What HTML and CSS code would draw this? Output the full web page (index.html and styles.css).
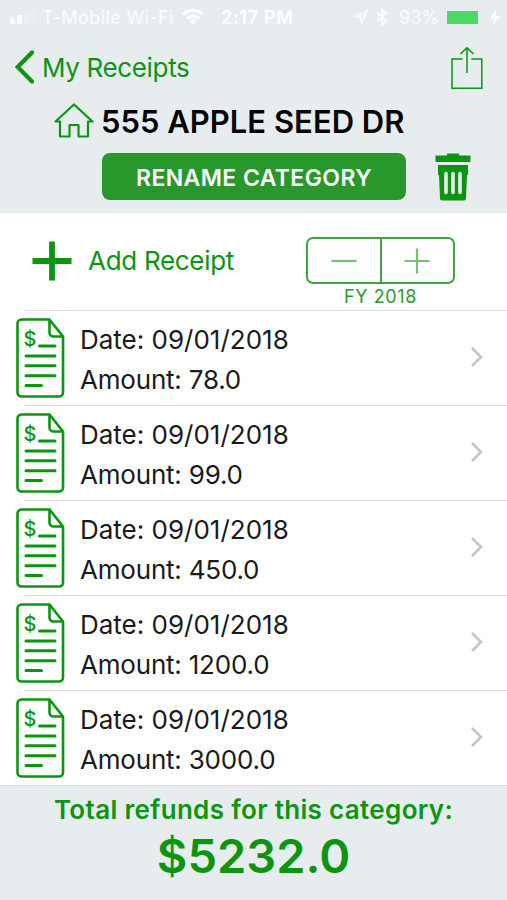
FILE: index.html
```html
<!DOCTYPE html>
<html lang="en">
  <head>
    <meta charset="UTF-8" />
    <meta name="viewport" content="width=device-width, initial-scale=1.0" />
    <title>My Receipts</title>
    <link rel="stylesheet" href="styles.css">
  </head>
  <body>
    <svg class="sprite" aria-hidden="true">
      <symbol id="icon-receipt" viewBox="0 0 49 80">
        <path d="M33.5 1.5H5.5a4 4 0 0 0-4 4v69a4 4 0 0 0 4 4h37.500a4 4 0 0 0 4-4V18.500L33.500 1.500V14.500a4 4 0 0 0 4 4H46.500" fill="none" stroke="currentColor" stroke-width="2.600" stroke-linejoin="round" />
        <path d="M23.500 28H39M10 38H39M10 47.800H39M10 57.800H39M10 67.600H25.500" fill="none" stroke="currentColor" stroke-width="3" stroke-linecap="round" />
      </symbol>
      <symbol id="icon-chevron" viewBox="0 0 14 22">
        <path d="M2 2l9 9-9 9" fill="none" stroke="currentColor" stroke-width="2.600" />
      </symbol>
    </svg>

    <header class="header">
      <div class="status-bar">
        <svg class="signal" width="27" height="16" viewBox="0 0 27 16">
          <g fill="#fff">
            <rect x="0" y="9" width="5" height="6" rx="1.500" />
            <rect x="7" y="6" width="5" height="9" rx="1.500" />
            <rect x="14" y="3" width="5" height="12" rx="1.500" opacity=".15" />
            <rect x="21" y="0" width="5" height="15" rx="1.500" opacity=".15" />
          </g>
        </svg>
        <span class="carrier">T-Mobile Wi-Fi</span>
        <svg class="wifi" width="22" height="16" viewBox="0 0 22 16">
          <g fill="none" stroke="#fff" stroke-width="3">
            <path d="M1.300 5.500a14 14 0 0 1 19.400 0" />
            <path d="M5 9.500a8.500 8.500 0 0 1 12 0" />
          </g>
          <path d="M11 15.500l-3.400-3.600a5 5 0 0 1 6.800 0z" fill="#fff" />
        </svg>
        <span class="clock">2:17 PM</span>
        <svg class="location" width="16" height="16" viewBox="0 0 16 16">
          <path d="M14.500 1.500L1 7.500l6.500 1L8.500 15z" fill="#fff" fill-opacity=".3" stroke="#fff" stroke-opacity=".7" stroke-width="1.500" stroke-linejoin="round" />
        </svg>
        <svg class="bluetooth" width="12" height="18" viewBox="0 0 12 18">
          <path d="M1.500 5l9 8L6 16.500v-15L10.500 5l-9 8" fill="none" stroke="#fff" stroke-opacity=".8" stroke-width="1.900" />
        </svg>
        <span class="battery-level">93%</span>
        <span class="battery"></span>
        <svg class="bolt" width="10" height="15" viewBox="0 0 10 15">
          <path d="M6 0L0 8.500h4L3 15l7-9H5.500z" fill="#fff" />
        </svg>
      </div>

      <nav class="nav-bar">
        <a class="back">
          <svg width="20" height="34" viewBox="0 0 20 34">
            <path d="M17 2.500L2.700 17l14.300 14.500" fill="none" stroke="currentColor" stroke-width="4.200" stroke-linecap="round" />
          </svg>
          <span>My Receipts</span>
        </a>
        <svg class="share" width="32" height="44" viewBox="0 0 32 44">
          <g fill="none" stroke="currentColor" stroke-width="1.500">
            <path d="M11.500 12H1V41.300H30.800V12H20.300" />
            <path d="M16 26V.800M9.500 7L16 .700 22.500 7" />
          </g>
        </svg>
      </nav>

      <div class="title">
        <svg width="40" height="36" viewBox="0 0 40 36">
          <path d="M6 18.500H1.500L20 1.500l18.500 17H34V33.500H24.500V22H15.500V33.500H6z" fill="none" stroke="currentColor" stroke-width="2.200" stroke-linejoin="round" />
        </svg>
        <h1>555 APPLE SEED DR</h1>
      </div>

      <div class="actions">
        <button class="rename">RENAME CATEGORY</button>
        <svg class="trash" width="36" height="48" viewBox="0 0 36 48">
          <path d="M12 2.500V.500h12v2h11.500V9H.500V2.500z" fill="currentColor" />
          <path d="M3 12h30v10h-1L31 45.500a2 2 0 0 1-2 2H7a2 2 0 0 1-2-2L4 22H3z" fill="currentColor" />
          <path d="M11 20.500v19M18 20.500v19M25 20.500v19" stroke="#e7edef" stroke-width="3.600" stroke-linecap="round" />
        </svg>
      </div>
    </header>

    <main>
      <section class="add-row">
        <svg class="plus" width="40" height="40" viewBox="0 0 40 40">
          <path d="M20 .500v39M.500 20h39" stroke="currentColor" stroke-width="5.800" />
        </svg>
        <span class="add-label">Add Receipt</span>
        <div class="year">
          <div class="stepper">
            <span>
              <svg width="26" height="26" viewBox="0 0 26 26">
                <path d="M.500 13h25" stroke="currentColor" stroke-width="2.200" />
              </svg>
            </span>
            <span>
              <svg width="26" height="26" viewBox="0 0 26 26">
                <path d="M.500 13h25M13 .500v25" stroke="currentColor" stroke-width="2.200" />
              </svg>
            </span>
          </div>
          <div class="year-label">FY 2018</div>
        </div>
      </section>

      <ul class="receipts">
        <li>
          <svg class="receipt-icon"><use href="#icon-receipt" /><text x="7.500" y="28">$</text></svg>
          <div class="details">
            <div class="date">Date: 09/01/2018</div>
            <div class="amount">Amount: 78.0</div>
          </div>
          <svg class="chevron"><use href="#icon-chevron" /></svg>
        </li>
        <li>
          <svg class="receipt-icon"><use href="#icon-receipt" /><text x="7.500" y="28">$</text></svg>
          <div class="details">
            <div class="date">Date: 09/01/2018</div>
            <div class="amount">Amount: 99.0</div>
          </div>
          <svg class="chevron"><use href="#icon-chevron" /></svg>
        </li>
        <li>
          <svg class="receipt-icon"><use href="#icon-receipt" /><text x="7.500" y="28">$</text></svg>
          <div class="details">
            <div class="date">Date: 09/01/2018</div>
            <div class="amount">Amount: 450.0</div>
          </div>
          <svg class="chevron"><use href="#icon-chevron" /></svg>
        </li>
        <li>
          <svg class="receipt-icon"><use href="#icon-receipt" /><text x="7.500" y="28">$</text></svg>
          <div class="details">
            <div class="date">Date: 09/01/2018</div>
            <div class="amount">Amount: 1200.0</div>
          </div>
          <svg class="chevron"><use href="#icon-chevron" /></svg>
        </li>
        <li>
          <svg class="receipt-icon"><use href="#icon-receipt" /><text x="7.500" y="28">$</text></svg>
          <div class="details">
            <div class="date">Date: 09/01/2018</div>
            <div class="amount">Amount: 3000.0</div>
          </div>
          <svg class="chevron"><use href="#icon-chevron" /></svg>
        </li>
      </ul>
    </main>

    <footer class="total">
      <div class="total-label">Total refunds for this category:</div>
      <div class="total-amount">$5232.0</div>
    </footer>
  </body>
</html>
```
FILE: styles.css
```css
* {
  box-sizing: border-box;
}

body {
  display: flex;
  flex-direction: column;
  height: 900px;
  margin: 0;
  overflow: hidden;
  background: white;
  color: #0b9510;
  font-family: Inter, "Liberation Sans", sans-serif;
  white-space: nowrap;
}

svg {
  display: block;
  flex-shrink: 0;
}

.sprite {
  position: absolute;
  width: 0;
  height: 0;
}

/* Header */
.header {
  height: 213px;
  background: #e7edef;
}

.status-bar {
  display: flex;
  align-items: center;
  height: 34px;
  padding-left: 10px;
  color: white;
  font-size: 18px;
}

.signal {
  margin-right: 5px;
}

.carrier {
  width: 134px;
  letter-spacing: 0.4px;
  opacity: 0.85;
}

.wifi {
  margin-left: 6px;
}

.clock {
  width: 75px;
  margin-left: 17px;
  font-weight: 600;
  letter-spacing: 0.7px;
}

.location {
  margin-left: 57px;
}

.bluetooth {
  margin-left: 7px;
}

.battery-level {
  width: 40px;
  margin-left: 11px;
  opacity: 0.8;
}

.battery {
  width: 31px;
  height: 13px;
  margin-left: 8px;
  background: #4cd964;
}

.bolt {
  margin-left: 12px;
}

.nav-bar {
  display: flex;
  justify-content: space-between;
  height: 66px;
  padding: 0 24px 0 15px;
}

.back {
  display: flex;
  align-items: center;
  height: 66px;
  font-size: 26px;
  letter-spacing: -0.35px;
}

.back span {
  margin-left: 7px;
}

.share {
  margin-top: 13px;
}

.title {
  display: flex;
  align-items: center;
  height: 42px;
  padding-left: 54px;
}

h1 {
  margin: 0 0 0 7px;
  color: #050505;
  font-size: 31px;
  font-weight: 600;
}

.actions {
  display: flex;
  align-items: center;
  margin-top: 10px;
  padding-left: 102px;
}

.rename {
  width: 304px;
  height: 47px;
  padding: 2px 0 0;
  border: none;
  border-radius: 8px;
  background: #28982c;
  color: white;
  font-family: inherit;
  font-size: 23px;
  font-weight: 600;
  letter-spacing: 0.4px;
}

.trash {
  margin: 1px 0 0 29px;
}

/* Add receipt row */
.add-row {
  display: flex;
  align-items: flex-start;
  height: 97px;
  padding: 24px 0 0 32px;
}

.plus {
  margin-top: 4px;
}

.add-label {
  width: 234px;
  padding-left: 16px;
  font-size: 26px;
  letter-spacing: -0.3px;
  line-height: 47px;
}

.year {
  width: 149px;
}

.stepper {
  display: flex;
  height: 47px;
  border: 2px solid #42a146;
  border-radius: 7px;
  color: #78bd7a;
}

.stepper span {
  display: flex;
  flex: 1;
  align-items: center;
  justify-content: center;
}

.stepper span + span {
  border-left: 2px solid #42a146;
}

.year-label {
  color: #279b2b;
  font-size: 18px;
  letter-spacing: 0.6px;
  line-height: 25px;
  text-align: center;
}

/* Receipt list */
.receipts {
  margin: 0;
  padding: 0;
  list-style: none;
}

.receipts li {
  display: flex;
  align-items: center;
  height: 95px;
  padding: 0 23px 0 16px;
  background: linear-gradient(#dcdddd, #dcdddd) 25px 0 / 100% 1px no-repeat;
}

.receipt-icon {
  width: 49px;
  height: 80px;
  fill: currentColor;
  font-size: 20px;
  font-weight: 500;
}

.details {
  flex: 1;
  padding: 5px 0 0 15px;
  color: #1a1a1a;
  font-size: 26px;
  line-height: 40px;
}

.amount {
  letter-spacing: -0.2px;
}

.chevron {
  width: 14px;
  height: 22px;
  margin-top: -1px;
  color: #c5c5c9;
}

/* Total */
.total {
  height: 115px;
  padding-top: 7px;
  border-top: 1px solid #dde1e2;
  background: #e7edef;
  font-weight: 600;
  text-align: center;
}

.total-label {
  font-size: 26px;
  letter-spacing: 0.33px;
  line-height: 34px;
}

.total-amount {
  font-size: 47px;
  line-height: 57px;
}
```
